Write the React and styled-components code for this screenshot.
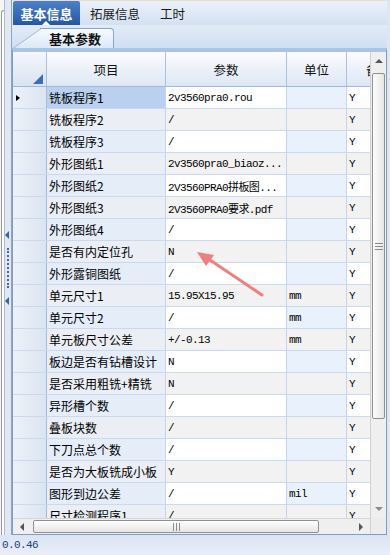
import React from 'react'
import styled, { createGlobalStyle } from 'styled-components'

const GlobalStyle = createGlobalStyle`
  html, body { margin: 0; padding: 0; }
  body { font-family: "Noto Sans CJK SC", "Noto Sans", sans-serif; background: #fff; }
`

const COLS = '34px 119px 121px 60px 64px'

const rows = [
  ['铣板程序1', '2v3560pra0.rou', '', 'Y'],
  ['铣板程序2', '/', '', 'Y'],
  ['铣板程序3', '/', '', 'Y'],
  ['外形图纸1', '2v3560pra0_biaoz...', '', 'Y'],
  ['外形图纸2', '2V3560PRA0拼板图...', '', 'Y'],
  ['外形图纸3', '2V3560PRA0要求.pdf', '', 'Y'],
  ['外形图纸4', '/', '', 'Y'],
  ['是否有内定位孔', 'N', '', 'Y'],
  ['外形露铜图纸', '/', '', 'Y'],
  ['单元尺寸1', '15.95X15.95', 'mm', 'Y'],
  ['单元尺寸2', '/', 'mm', 'Y'],
  ['单元板尺寸公差', '+/-0.13', 'mm', 'Y'],
  ['板边是否有钻槽设计', 'N', '', 'Y'],
  ['是否采用粗铣+精铣', 'N', '', 'Y'],
  ['异形槽个数', '/', '', 'Y'],
  ['叠板块数', '/', '', 'Y'],
  ['下刀点总个数', '/', '', 'Y'],
  ['是否为大板铣成小板', 'Y', '', 'Y'],
  ['图形到边公差', '/', 'mil', 'Y'],
  ['尺寸检测程序1', '/', '', 'Y'],
]

export default function App() {
  return (
    <Root>
      <GlobalStyle />
      <Body>
        <LeftEdge>
          <Rail />
          <Splitter>
            <SplitArrow />
            <SplitDots />
            <SplitArrow />
          </Splitter>
        </LeftEdge>
        <Main>
          <TabBar>
            <Tab $active>基本信息</Tab>
            <Tab>拓展信息</Tab>
            <Tab>工时</Tab>
          </TabBar>
          <SubStrip>
            <SubTab>基本参数</SubTab>
          </SubStrip>
          <Frame>
            <Grid>
              <HeadRow>
                <Corner><CornerMark /></Corner>
                <HeadCell>项目</HeadCell>
                <HeadCell>参数</HeadCell>
                <HeadCell>单位</HeadCell>
                <HeadCell>备注</HeadCell>
              </HeadRow>
              <RowsArea>
                {rows.map((r, i) => (
                  <Row key={i}>
                    <RowHead>{i === 0 && <Pointer />}</RowHead>
                    <ItemCell $alt={i % 2 === 1} $sel={i === 0}>{r[0]}</ItemCell>
                    <ValueCell $alt={i % 2 === 1}>{r[1]}</ValueCell>
                    <UnitCell $alt={i % 2 === 1}>{r[2]}</UnitCell>
                    <ValueCell $alt={i % 2 === 1}>{r[3]}</ValueCell>
                  </Row>
                ))}
              </RowsArea>
              <HScroll>
                <ScrollBtn><Arrow $dir="left" /></ScrollBtn>
                <HTrack>
                  <HThumb><Grip $h /></HThumb>
                </HTrack>
                <ScrollBtn><Arrow $dir="right" /></ScrollBtn>
              </HScroll>
            </Grid>
            <VScroll>
              <VBtn><Arrow $dir="up" /></VBtn>
              <VTrack>
                <VThumb><Grip /></VThumb>
              </VTrack>
              <VBtn><Arrow $dir="down" $light /></VBtn>
              <ScrollCorner />
            </VScroll>
          </Frame>
        </Main>
      </Body>
      <StatusBar>0.0.46</StatusBar>
      <Annotation width="390" height="555" viewBox="0 0 390 555">
        <line x1="262" y1="295" x2="207" y2="258" stroke="#ef7f7f" strokeWidth="3" strokeLinecap="round" />
        <polygon points="197,252 214,255 206,266" fill="#ef7f7f" />
      </Annotation>
    </Root>
  )
}

const Root = styled.div`
  position: relative;
  width: 390px;
  height: 555px;
  display: flex;
  flex-direction: column;
  background: #dfe8f4;
  overflow: hidden;
`

const Body = styled.div`
  flex: 1;
  display: flex;
  min-height: 0;
`

const LeftEdge = styled.div`
  width: 12px;
  display: flex;
  background: #f3f5f8;
`

const Rail = styled.div`
  width: 3px;
  margin-left: 1px;
  margin-top: 10px;
  border-left: 1px solid #9a9a9a;
  border-top-left-radius: 3px;
  border-top: 1px solid #9a9a9a;
  background: #fbfbfb;
`

const Splitter = styled.div`
  flex: 1;
  display: flex;
  flex-direction: column;
  align-items: center;
  justify-content: center;
  gap: 5px;
  background: #e2e8f1;
  border-left: 1px solid #b3bccb;
  border-right: 1px solid #8fa3c2;
`

const SplitArrow = styled.span`
  width: 0;
  height: 0;
  border-top: 4px solid transparent;
  border-bottom: 4px solid transparent;
  border-right: 4px solid #3a62a0;
  margin-right: 2px;
`

const SplitDots = styled.span`
  width: 0;
  height: 40px;
  margin: 4px 0;
  border-left: 2px dotted #3f66a6;
`

const Main = styled.div`
  flex: 1;
  min-width: 0;
  display: flex;
  flex-direction: column;
  padding-right: 3px;
  background: #dde7f4;
`

const TabBar = styled.div`
  height: 25px;
  box-sizing: border-box;
  display: flex;
  padding-left: 1px;
  border-top: 1px solid #e8dfc4;
  background: linear-gradient(#eaf1fa, #d4e1f2);
`

const Tab = styled.div`
  position: relative;
  display: flex;
  align-items: center;
  justify-content: center;
  ${p => (p.$active ? 'width: 67px;' : 'padding: 0 10px;')}
  font-size: ${p => (p.$active ? '13px' : '12.5px')};
  font-weight: ${p => (p.$active ? 700 : 400)};
  color: ${p => (p.$active ? '#fff' : '#1a1a1a')};
  background: ${p => (p.$active ? 'linear-gradient(#4d80c9, #2358a8)' : 'transparent')};
  border-radius: 2px 2px 0 0;
  &::after {
    content: '';
    display: ${p => (p.$active ? 'block' : 'none')};
    position: absolute;
    left: 29px;
    bottom: 0;
    border-left: 4px solid transparent;
    border-right: 4px solid transparent;
    border-bottom: 4px solid #fff;
  }
`

const SubStrip = styled.div`
  height: 23px;
  display: flex;
  align-items: flex-end;
  padding-left: 28px;
  background: linear-gradient(#e2ebf7, #d0dff2);
`

const SubTab = styled.div`
  position: relative;
  height: 19px;
  line-height: 19px;
  padding: 0 12px 0 9px;
  font-size: 13px;
  font-weight: 700;
  color: #111;
  border: 1px solid #87a5d0;
  border-left: none;
  border-bottom: none;
  border-radius: 0 4px 0 0;
  background: linear-gradient(#f7faff, #dce8f7);
  z-index: 0;
  &::before {
    content: '';
    position: absolute;
    left: -27px;
    top: -1px;
    bottom: 0;
    width: 30px;
    border-left: 1px solid #87a5d0;
    border-top: 1px solid #87a5d0;
    background: linear-gradient(#f7faff, #dce8f7);
    transform: skewX(-55deg);
    transform-origin: bottom left;
    z-index: -1;
  }
`

const Frame = styled.div`
  flex: 1;
  min-height: 0;
  display: flex;
  border: 1px solid #7d9cca;
  border-top: 4px solid #a9c4e9;
  background: #fff;
`

const Grid = styled.div`
  flex: 1;
  min-width: 0;
  display: flex;
  flex-direction: column;
  overflow: hidden;
`

const HeadRow = styled.div`
  display: grid;
  grid-template-columns: ${COLS};
  height: 35px;
  flex-shrink: 0;
  box-sizing: border-box;
  border-bottom: 1px solid #9fb8db;
`

const HeadCell = styled.div`
  display: flex;
  align-items: center;
  justify-content: center;
  font-size: 12.5px;
  color: #111;
  white-space: nowrap;
  overflow: hidden;
  border-right: 1px solid #a9c0df;
  background: linear-gradient(#fbfcfe, #dde7f4);
`

const Corner = styled(HeadCell)`
  align-items: flex-end;
  justify-content: flex-end;
  padding: 0 3px 2px 0;
  background: linear-gradient(#f4f7fc, #d9e3f1);
`

const CornerMark = styled.span`
  width: 0;
  height: 0;
  border-left: 10px solid transparent;
  border-bottom: 10px solid #3b6cbd;
`

const RowsArea = styled.div`
  flex: 1;
  min-height: 0;
  overflow: hidden;
`

const Row = styled.div`
  display: grid;
  grid-template-columns: ${COLS};
  height: 22px;
  box-sizing: border-box;
  border-bottom: 1px solid #cad9ee;
`

const Cell = styled.div`
  display: flex;
  align-items: center;
  padding-left: 2px;
  white-space: nowrap;
  overflow: hidden;
  color: #000;
  border-right: 1px solid #c3d4ec;
`

const RowHead = styled(Cell)`
  padding-left: 3px;
  background: linear-gradient(to right, #edf2f9, #dbe4f1);
  border-right: 1px solid #a4bbdb;
`

const Pointer = styled.span`
  width: 0;
  height: 0;
  border-top: 3.5px solid transparent;
  border-bottom: 3.5px solid transparent;
  border-left: 4px solid #000;
`

const ItemCell = styled(Cell)`
  font-size: 12px;
  background: ${p => (p.$sel ? '#b9d1ef' : p.$alt ? '#ebeff5' : '#e5edf8')};
`

const ValueCell = styled(Cell)`
  font-family: "Liberation Mono", "Noto Sans CJK SC", monospace;
  font-size: 11px;
  letter-spacing: -0.6px;
  background: ${p => (p.$alt ? '#f2f2f2' : '#fff')};
`

const UnitCell = styled(ValueCell)`
  background: ${p => (p.$alt ? '#f2f2f2' : '#e9f1fc')};
`

const HScroll = styled.div`
  height: 16px;
  flex-shrink: 0;
  display: flex;
  background: #efefef;
  border-top: 1px solid #d6d6d6;
  box-sizing: border-box;
`

const ScrollBtn = styled.div`
  width: 18px;
  display: flex;
  align-items: center;
  justify-content: center;
`

const HTrack = styled.div`
  flex: 1;
  display: flex;
  padding: 1px 2px;
`

const HThumb = styled.div`
  width: 286px;
  display: flex;
  align-items: center;
  justify-content: center;
  box-sizing: border-box;
  border: 1px solid #8f9090;
  border-radius: 2px;
  background: linear-gradient(#fdfdfd, #e6e6e6);
`

const Grip = styled.span`
  width: ${p => (p.$h ? '7px' : '8px')};
  height: ${p => (p.$h ? '8px' : '7px')};
  background: repeating-linear-gradient(
    ${p => (p.$h ? 'to right' : 'to bottom')},
    #8a8a8a 0 1px,
    transparent 1px 3px
  );
`

const VScroll = styled.div`
  width: 16px;
  display: flex;
  flex-direction: column;
  background: #efefef;
  border-left: 1px solid #d0d0d0;
  box-sizing: border-box;
`

const VBtn = styled.div`
  height: 18px;
  display: flex;
  align-items: center;
  justify-content: center;
`

const VTrack = styled.div`
  flex: 1;
  padding: 3px 1px 0 1px;
`

const VThumb = styled.div`
  height: 346px;
  display: flex;
  align-items: center;
  justify-content: center;
  box-sizing: border-box;
  border: 1px solid #8f9090;
  border-radius: 2px;
  background: linear-gradient(to right, #fdfdfd, #e6e6e6);
`

const ScrollCorner = styled.div`
  height: 16px;
  background: #ececec;
`

const arrowBorders = {
  up: 'border-left: 4px solid transparent; border-right: 4px solid transparent; border-bottom: 4px solid COLOR;',
  down: 'border-left: 4px solid transparent; border-right: 4px solid transparent; border-top: 4px solid COLOR;',
  left: 'border-top: 4px solid transparent; border-bottom: 4px solid transparent; border-right: 4px solid COLOR;',
  right: 'border-top: 4px solid transparent; border-bottom: 4px solid transparent; border-left: 4px solid COLOR;',
}

const Arrow = styled.span`
  width: 0;
  height: 0;
  ${p => arrowBorders[p.$dir].replace('COLOR', p.$light ? '#8c8c8c' : '#555')}
`

const StatusBar = styled.div`
  height: 20px;
  display: flex;
  align-items: center;
  padding-left: 2px;
  font-family: "Liberation Mono", monospace;
  font-size: 11px;
  letter-spacing: -0.6px;
  color: #1b427c;
  background: linear-gradient(#dae5f3, #e7eef8);
`

const Annotation = styled.svg`
  position: absolute;
  left: 0;
  top: 0;
  pointer-events: none;
`
